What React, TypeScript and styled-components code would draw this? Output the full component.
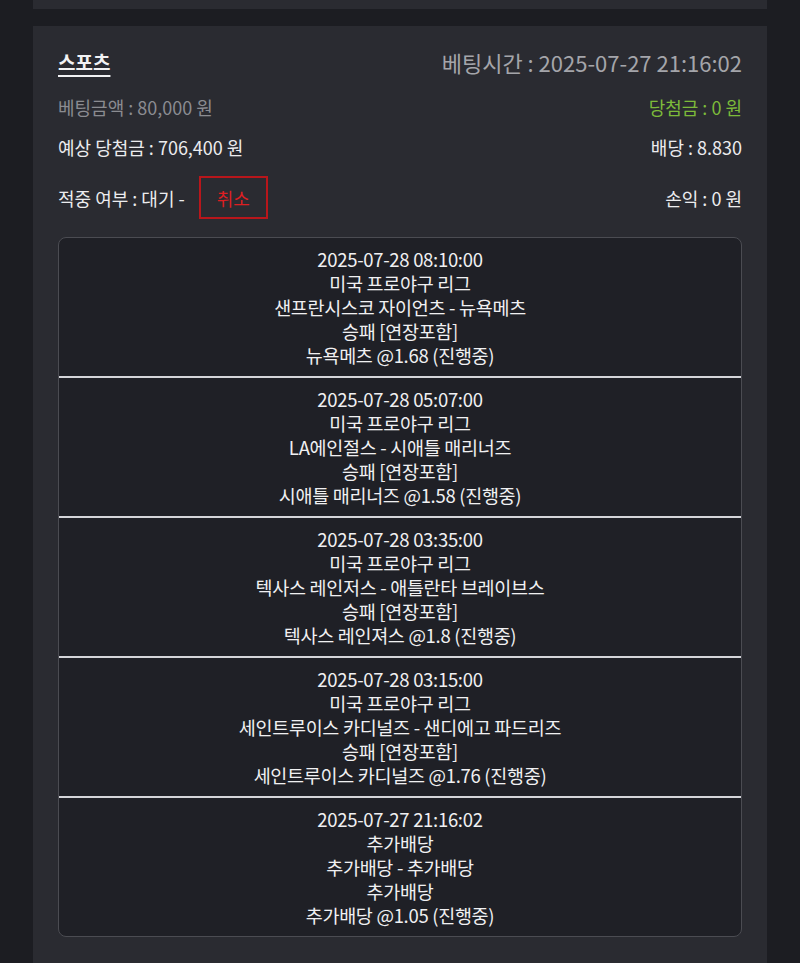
import styled, { createGlobalStyle } from "styled-components";

const GlobalStyle = createGlobalStyle`
  html, body {
    margin: 0;
    padding: 0;
    background: #1c1d22;
  }
  body {
    font-family: "Noto Sans CJK KR", "Noto Sans", sans-serif;
    color: #ececee;
  }
`;

const Page = styled.div`
  display: flex;
  flex-direction: column;
  gap: 17px;
  padding: 0 33px;
  min-height: 963px;
`;

// remainder of the previous bet card cut off at the top
const PrevCard = styled.div`
  height: 9px;
  background: #2a2b31;
`;

const Card = styled.section`
  background: #2a2b31;
  padding: 21px 25px 30px;
  display: flex;
  flex-direction: column;
`;

const Row = styled.div<{ $gap?: number }>`
  display: flex;
  justify-content: space-between;
  align-items: center;
  margin-top: ${(p) => p.$gap ?? 0}px;
  line-height: 30px;
  font-size: 18px;
`;

const Category = styled.span`
  font-size: 19px;
  font-weight: 700;
  text-decoration: underline;
  text-underline-offset: 5px;
  text-decoration-thickness: 2px;
  color: #f2f2f4;
`;

const Text = styled.span<{ $color?: string; $size?: number }>`
  color: ${(p) => p.$color ?? "#ececee"};
  font-size: ${(p) => p.$size ?? 18}px;
`;

const Left = styled.div`
  display: flex;
  align-items: center;
  gap: 14px;
`;

const CancelButton = styled.button`
  width: 69px;
  height: 43px;
  background: transparent;
  border: 2px solid #b8161b;
  color: #dc1f22;
  font-family: inherit;
  font-size: 18px;
  cursor: pointer;
`;

const Games = styled.div`
  margin-top: 18px;
  background: #1f2026;
  border: 1px solid #4b4c52;
  border-radius: 8px;
  overflow: hidden;
`;

const Game = styled.div`
  padding: 9px 0;
  text-align: center;
  font-size: 18.5px;
  line-height: 24px;
  letter-spacing: -0.3px;
  color: #f0f0f2;
  & + & {
    border-top: 2px solid #d4d5d9;
  }
`;

type Bet = {
  time: string;
  league: string;
  match: string;
  market: string;
  pick: string;
};

const bets: Bet[] = [
  {
    time: "2025-07-28 08:10:00",
    league: "미국 프로야구 리그",
    match: "샌프란시스코 자이언츠 - 뉴욕메츠",
    market: "승패 [연장포함]",
    pick: "뉴욕메츠 @1.68 (진행중)",
  },
  {
    time: "2025-07-28 05:07:00",
    league: "미국 프로야구 리그",
    match: "LA에인절스 - 시애틀 매리너즈",
    market: "승패 [연장포함]",
    pick: "시애틀 매리너즈 @1.58 (진행중)",
  },
  {
    time: "2025-07-28 03:35:00",
    league: "미국 프로야구 리그",
    match: "텍사스 레인저스 - 애틀란타 브레이브스",
    market: "승패 [연장포함]",
    pick: "텍사스 레인져스 @1.8 (진행중)",
  },
  {
    time: "2025-07-28 03:15:00",
    league: "미국 프로야구 리그",
    match: "세인트루이스 카디널즈 - 샌디에고 파드리즈",
    market: "승패 [연장포함]",
    pick: "세인트루이스 카디널즈 @1.76 (진행중)",
  },
  {
    time: "2025-07-27 21:16:02",
    league: "추가배당",
    match: "추가배당 - 추가배당",
    market: "추가배당",
    pick: "추가배당 @1.05 (진행중)",
  },
];

export default function App() {
  return (
    <>
      <GlobalStyle />
      <Page>
        <PrevCard />
        <Card>
          <Row>
            <Category>스포츠</Category>
            <Text $color="#a4a5aa" $size={22}>
              베팅시간 : 2025-07-27 21:16:02
            </Text>
          </Row>
          <Row $gap={15}>
            <Text $color="#8b8c91">베팅금액 : 80,000 원</Text>
            <Text $color="#7cba3a">당첨금 : 0 원</Text>
          </Row>
          <Row $gap={10}>
            <Text>예상 당첨금 : 706,400 원</Text>
            <Text>배당 : 8.830</Text>
          </Row>
          <Row $gap={14}>
            <Left>
              <Text>적중 여부 : 대기 -</Text>
              <CancelButton>취소</CancelButton>
            </Left>
            <Text>손익 : 0 원</Text>
          </Row>
          <Games>
            {bets.map((b) => (
              <Game key={b.time + b.match}>
                <div>{b.time}</div>
                <div>{b.league}</div>
                <div>{b.match}</div>
                <div>{b.market}</div>
                <div>{b.pick}</div>
              </Game>
            ))}
          </Games>
        </Card>
      </Page>
    </>
  );
}
